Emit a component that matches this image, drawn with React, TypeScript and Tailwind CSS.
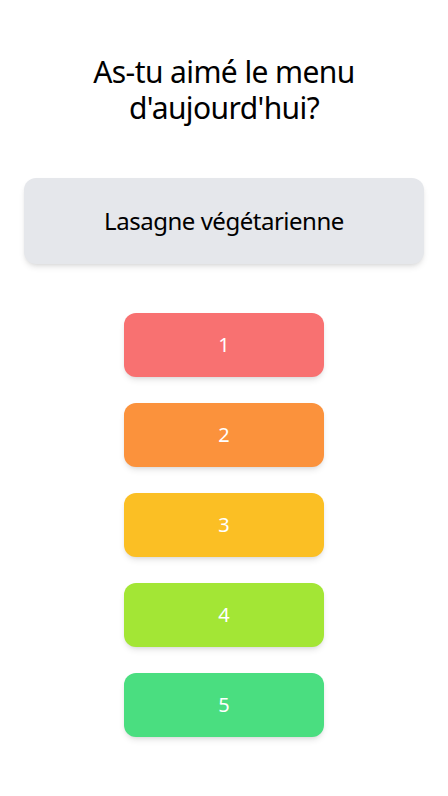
import React from "react";

const ratings = [
  { value: 1, className: "bg-[#f87171]" },
  { value: 2, className: "bg-[#fb923c]" },
  { value: 3, className: "bg-[#fbbf24]" },
  { value: 4, className: "bg-[#a3e635]" },
  { value: 5, className: "bg-[#4ade80]" },
];

export default function App() {
  return (
    <main className="min-h-screen bg-white px-6 pt-[54px] font-['Noto_Sans',sans-serif] text-black">
      <h1 className="mx-auto max-w-[300px] text-center text-3xl leading-9 tracking-[-0.02em]">
        As-tu aimé le menu d'aujourd'hui?
      </h1>

      {/* plat du jour */}
      <div className="mt-[52px] rounded-xl bg-[#e5e7eb] py-[27px] text-center text-2xl leading-8 tracking-[-0.02em] shadow-md">
        Lasagne végétarienne
      </div>

      <div className="mt-[49px] flex flex-col items-center gap-[26px]">
        {ratings.map((r) => (
          <button
            key={r.value}
            className={`flex h-16 w-[200px] items-center justify-center rounded-xl text-xl text-white shadow-md ${r.className}`}
          >
            {r.value}
          </button>
        ))}
      </div>
    </main>
  );
}
